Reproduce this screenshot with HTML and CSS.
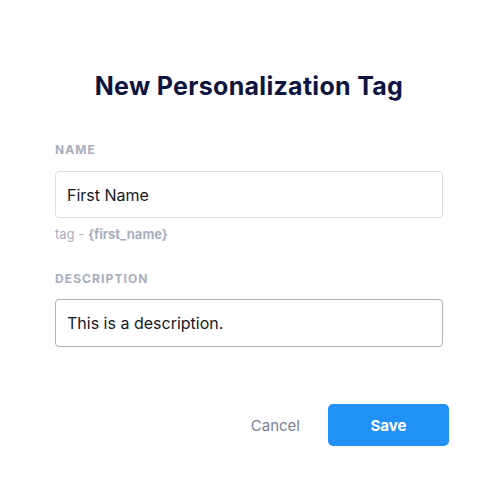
FILE: index.html
```html
<!DOCTYPE html>
<html>
<head>
<meta charset="utf-8">
<link rel="stylesheet" href="styles.css">
</head>
<body>
<div class="modal">
  <h1 class="title">New Personalization Tag</h1>
  <div class="field">
    <div class="label">NAME</div>
    <div class="input">First Name</div>
    <div class="hint">tag - <b>{first_name}</b></div>
  </div>
  <div class="field field-desc">
    <div class="label">DESCRIPTION</div>
    <div class="input input-dark">This is a description.</div>
  </div>
  <div class="actions">
    <span class="cancel">Cancel</span>
    <span class="save">Save</span>
  </div>
</div>
</body>
</html>
```

FILE: styles.css
```css
html, body { margin: 0; padding: 0; background: #fff; }
body { font-family: "Inter", "Liberation Sans", sans-serif; }
.modal { width: 497px; height: 482px; box-sizing: border-box; padding: 68px 54px 0 55px; }
.title { margin: 0; text-align: center; font-size: 25px; font-weight: 700; color: #0d1440; line-height: 36px; letter-spacing: 0.3px; }
.field { margin-top: 39px; }
.field-desc { margin-top: 30px; }
.label { font-size: 12px; font-weight: 700; color: #a9aec0; line-height: 14px; letter-spacing: 1.1px; }
.input { margin-top: 14px; height: 47px; box-sizing: border-box; border: 1px solid #dcdee3; border-radius: 4px; padding: 0 11px; display: flex; align-items: center; font-size: 16px; color: #16181f; }
.input-dark { margin-top: 13px; border-color: #aeb1b9; height: 48px; }
.hint { margin-top: 8px; font-size: 13px; color: #a9aec0; line-height: 16px; }
.hint b { font-weight: 700; }
.actions { margin-top: 57px; display: flex; justify-content: flex-end; align-items: center; gap: 28px; margin-right: -6px; }
.cancel { font-size: 15px; color: #7a7f94; }
.save { width: 121px; height: 42px; border-radius: 5px; background: #2291f5; color: #fff; font-size: 15px; font-weight: 700; display: flex; align-items: center; justify-content: center; }
```
